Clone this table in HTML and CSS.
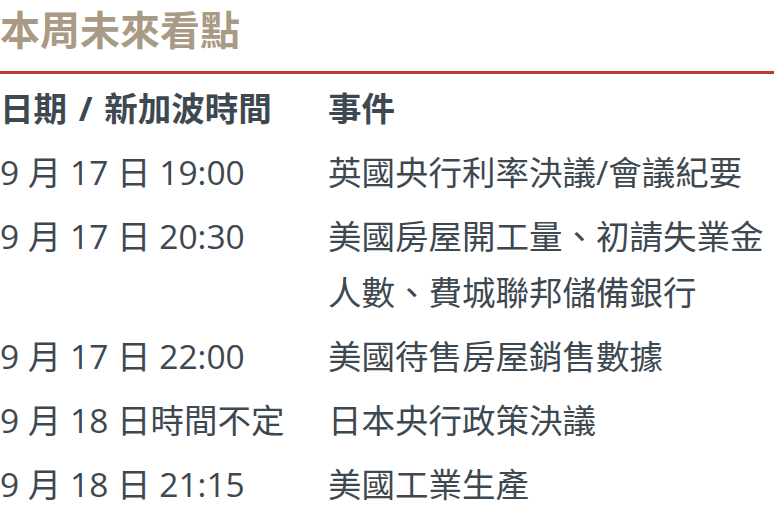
FILE: index.html
```html
<!DOCTYPE html>
<html lang="zh-Hant">
<head>
<meta charset="utf-8">
<link rel="stylesheet" href="styles.css">
</head>
<body>
<h2 class="title">本周未來看點</h2>
<div class="rule"></div>
<div class="table">
  <div class="cell head">日期 / 新加波時間</div>
  <div class="cell head">事件</div>
  <div class="cell">9 月 17 日 19:00</div>
  <div class="cell">英國央行利率決議/會議紀要</div>
  <div class="cell">9 月 17 日 20:30</div>
  <div class="cell">美國房屋開工量、初請失業金人數、費城聯邦儲備銀行</div>
  <div class="cell">9 月 17 日 22:00</div>
  <div class="cell">美國待售房屋銷售數據</div>
  <div class="cell">9 月 18 日時間不定</div>
  <div class="cell">日本央行政策決議</div>
  <div class="cell">9 月 18 日 21:15</div>
  <div class="cell">美國工業生產</div>
</div>
</body>
</html>
```
FILE: styles.css
```css
html, body {
  margin: 0;
  padding: 0;
  background: #ffffff;
}
body {
  font-family: "Open Sans", "Noto Sans CJK TC", sans-serif;
  color: #3d4850;
  width: 774px;
  overflow: hidden;
}
.title {
  margin: 0;
  font-size: 40px;
  line-height: 56px;
  font-weight: 700;
  color: #a99a85;
  font-family: "Noto Sans CJK TC", sans-serif;
}
.rule {
  margin-top: 15px;
  height: 3px;
  background: #c0392b;
}
.table {
  display: grid;
  grid-template-columns: 328px 1fr;
  padding-top: 2px;
}
.cell {
  font-size: 33.5px;
  line-height: 56px;
  padding: 4px 0;
}
.head {
  font-weight: 700;
  word-spacing: 3px;
}
```
